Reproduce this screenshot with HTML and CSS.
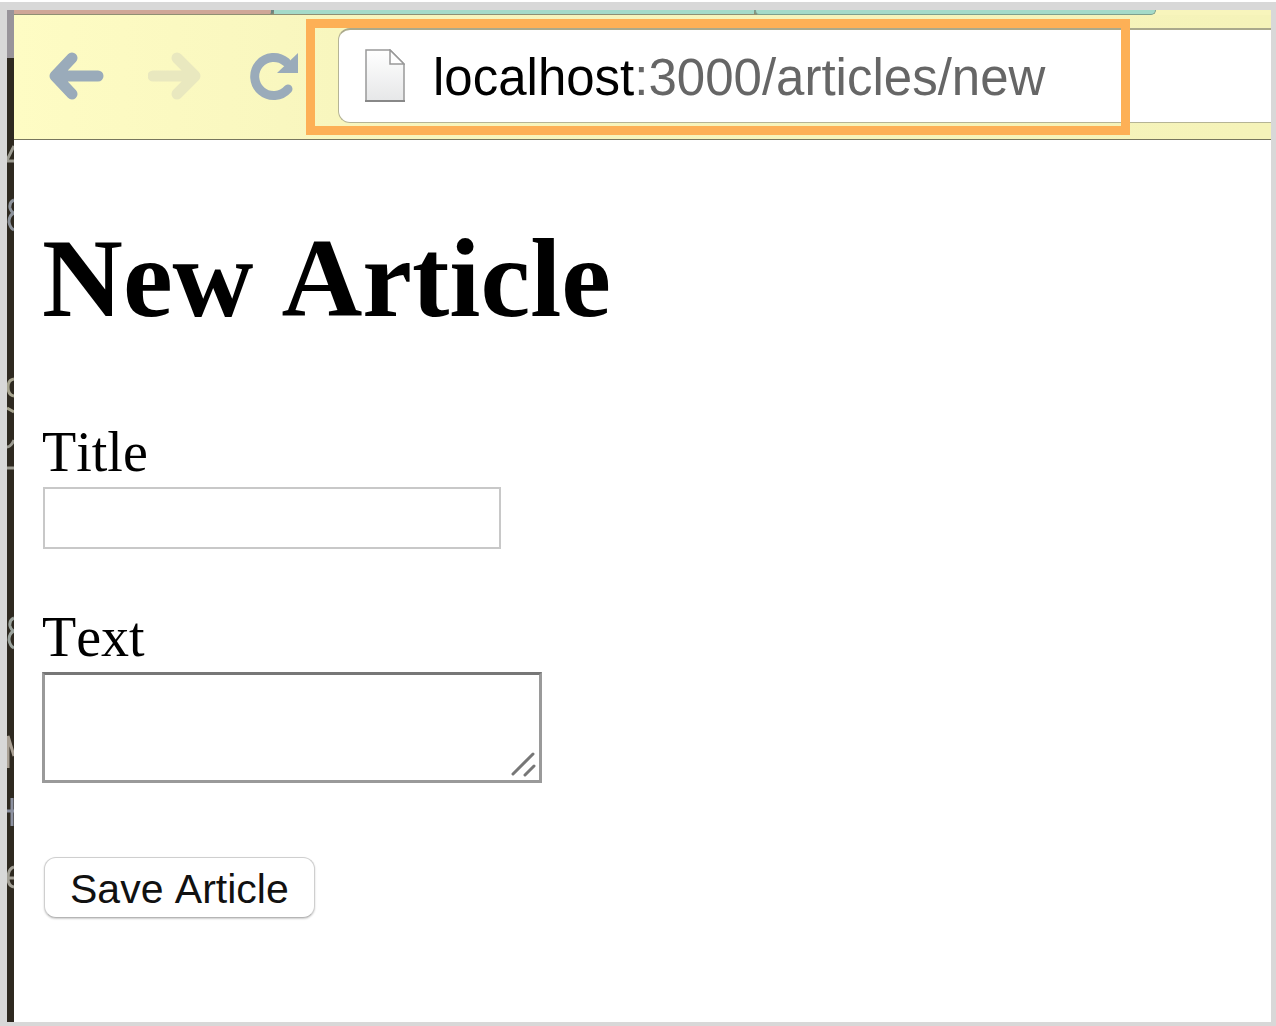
FILE: index.html
```html
<!DOCTYPE html>
<html lang="en">
<head>
<meta charset="utf-8">
<meta name="viewport" content="width=device-width, initial-scale=1">
<title>New Article</title>
<link rel="stylesheet" href="styles.css">
</head>
<body>
<div class="desktop">
  <div class="editor-edge" aria-hidden="true">
    <svg width="7" height="1012" fill="none" stroke="#9d9c92" stroke-width="3">
      <rect width="7" height="48" fill="#98949a" stroke="none"/>
      <path d="M0 150 7 136M0 151h7"/>
      <path d="M7 190q-5 2-4 8 1 4 4 5-5 2-5 9 1 6 5 8" stroke="#8d939b"/>
      <path d="M7 369q-6 1-6 8 0 8 6 9M0 398l7 4" stroke="#a7a48f"/>
      <path d="M0 437q4 0 7-7M0 458h7"/>
      <path d="M7 608q-5 2-4 8 1 4 4 5-5 2-5 9 1 6 5 8" stroke="#9ba39d"/>
      <path d="M1 758v-32l6 20" stroke="#aaa195"/>
      <path d="M0 801h7M5 788v28" stroke="#8c91a0"/>
      <path d="M7 857q-6 2-6 11 0 8 6 9M2 868h5" stroke="#a3a096"/>
    </svg>
  </div>
  <div class="browser">
    <div class="tabs">
      <div class="tab tab-red"></div>
      <div class="tab tab-teal"></div>
      <div class="tab tab-teal tab-last"></div>
    </div>
    <header class="toolbar">
      <nav class="controls">
        <button class="control" type="button" aria-label="Back">
          <svg width="56" height="56" fill="none" stroke="#9aabba" stroke-width="11" stroke-linecap="round" stroke-linejoin="round"><path d="M24 10 7 28l17 18M8 28h42"/></svg>
        </button>
        <button class="control" type="button" aria-label="Forward">
          <svg width="56" height="56" fill="none" stroke="#e9e8bf" stroke-width="11" stroke-linecap="round" stroke-linejoin="round"><path d="m29 10 18 18-18 18M46 28H5"/></svg>
        </button>
        <button class="control" type="button" aria-label="Reload">
          <svg width="56" height="56"><path d="M40 41A19 19 0 1 1 38 14" fill="none" stroke="#9aabba" stroke-width="9" stroke-linecap="round"/><path d="M50 5v20H29z" fill="#9aabba"/></svg>
        </button>
      </nav>
      <div class="address">
        <svg class="page-icon" width="40" height="54">
          <defs><linearGradient id="paper" x2="0" y2="1"><stop stop-color="#fff"/><stop offset="1" stop-color="#e6e7e8"/></linearGradient></defs>
          <path d="M1 1h24l14 14v37H1z" fill="url(#paper)" stroke="#999" stroke-width="1.5"/>
          <path d="M25 1v14h14z" fill="#fff" stroke="#999" stroke-width="1.5"/>
          <path d="M0 52h40" stroke="#888" stroke-width="2"/>
        </svg>
        <div class="url" role="textbox" aria-label="Address" contenteditable="true" spellcheck="false"><span class="host">localhost</span>:3000/articles/new</div>
        <div class="highlight"></div>
      </div>
    </header>
    <main class="page">
      <h1>New Article</h1>
      <form>
        <div class="field">
          <label for="title">Title</label>
          <input id="title" class="title-input" type="text">
        </div>
        <div class="field">
          <label for="text">Text</label>
          <div class="text-box">
            <textarea id="text"></textarea>
            <svg class="grip" width="28" height="28" stroke="#777" stroke-width="3" stroke-linecap="round"><path d="M3 23 23 3M15 24l9-9"/></svg>
          </div>
        </div>
        <button class="save" type="submit">Save Article</button>
      </form>
    </main>
  </div>
</div>
</body>
</html>
```
FILE: styles.css
```css
* {
  box-sizing: border-box;
}

body {
  margin: 0;
  background: #d8d8d8;
  font-family: "Liberation Serif", "Times New Roman", serif;
  font-size: 56px;
  font-kerning: none;
  line-height: 64px;
  color: #000;
}

.desktop {
  display: flex;
  min-height: 100vh;
  padding: 8px 5px 4px 7px;
  border-top: 2px solid #fff;
}

.editor-edge {
  flex: none;
  width: 7px;
  background: #2e2920;
}

.editor-edge svg {
  display: block;
}

.browser {
  display: flex;
  flex-direction: column;
  flex: 1;
  min-width: 0;
  overflow: hidden;
  background: #fff;
}

.tabs {
  display: flex;
  height: 5px;
  background: linear-gradient(90deg, #8f8f73 1136px, #f8f5bc 1136px);
}

.tab {
  height: 4px;
}

.tab-red {
  width: 260px;
  background: #cfa797;
  border-right: 3px solid #6d8580;
  border-bottom-right-radius: 4px;
}

.tab-teal {
  width: 480px;
  background: #a4dac8;
}

.tab-last {
  width: 402px;
  height: 5px;
  border: solid #7d9f8d;
  border-width: 0 1px 1px 2px;
  border-radius: 0 0 6px 6px;
}

.toolbar {
  display: flex;
  align-items: center;
  padding: 13px 0 16px 34px;
  border-bottom: 1px solid #77765e;
  background: linear-gradient(90deg, #fefcc4, #f7f5bd 30%, #f5f3b9);
}

.controls {
  display: flex;
  gap: 44px;
}

.control {
  padding: 0;
  border: 0;
  background: none;
}

.control svg {
  display: block;
}

.address {
  position: relative;
  display: flex;
  align-items: center;
  flex: 1;
  gap: 28px;
  height: 95px;
  margin-left: 34px;
  padding-left: 26px;
  border: 1px solid #b5b495;
  border-top: 2px solid #aaa98c;
  border-right: 0;
  border-radius: 12px 0 0 12px;
  background: #fff;
}

.page-icon {
  flex: none;
}

.url {
  padding-top: 4px;
  font-family: "Liberation Sans", Arial, sans-serif;
  font-size: 51px;
  line-height: 56px;
  white-space: nowrap;
  color: #666;
}

.host {
  color: #000;
}

.highlight {
  position: absolute;
  top: -11px;
  left: -33px;
  width: 824px;
  height: 116px;
  border: 9px solid #fdb056;
  pointer-events: none;
}

.page {
  padding: 74px 28px 64px;
}

h1 {
  margin: 0 0 78px;
  font-size: 112px;
  line-height: 128px;
}

.field {
  display: flex;
  flex-direction: column;
  align-items: flex-start;
  gap: 3px;
  margin-bottom: 56px;
}

.title-input {
  width: 458px;
  height: 62px;
  margin: 0 1px;
  padding: 4px 8px;
  border: 2px solid #c8c8c8;
  font: 40px "Liberation Sans", Arial, sans-serif;
}

.text-box {
  display: grid;
}

.text-box > * {
  grid-area: 1 / 1;
}

textarea {
  width: 500px;
  height: 111px;
  padding: 4px 8px;
  border: 3px solid #9a9a9a;
  border-top-color: #777;
  font: 40px "Liberation Sans", Arial, sans-serif;
  resize: none;
}

.grip {
  place-self: end;
  margin: 4px;
  pointer-events: none;
}

.save {
  display: block;
  margin: 74px 2px 0;
  padding: 7px 25px 4px;
  border: 1px solid #cfcfcf;
  border-bottom-color: #b5b5b5;
  border-radius: 12px;
  background: #fff;
  box-shadow: 0 1px 2px #0003;
  font-family: "Liberation Sans", Arial, sans-serif;
  font-size: 41px;
  font-kerning: none;
  line-height: 48px;
  color: #111;
}

.field:last-of-type {
  margin-bottom: 0;
}
```
